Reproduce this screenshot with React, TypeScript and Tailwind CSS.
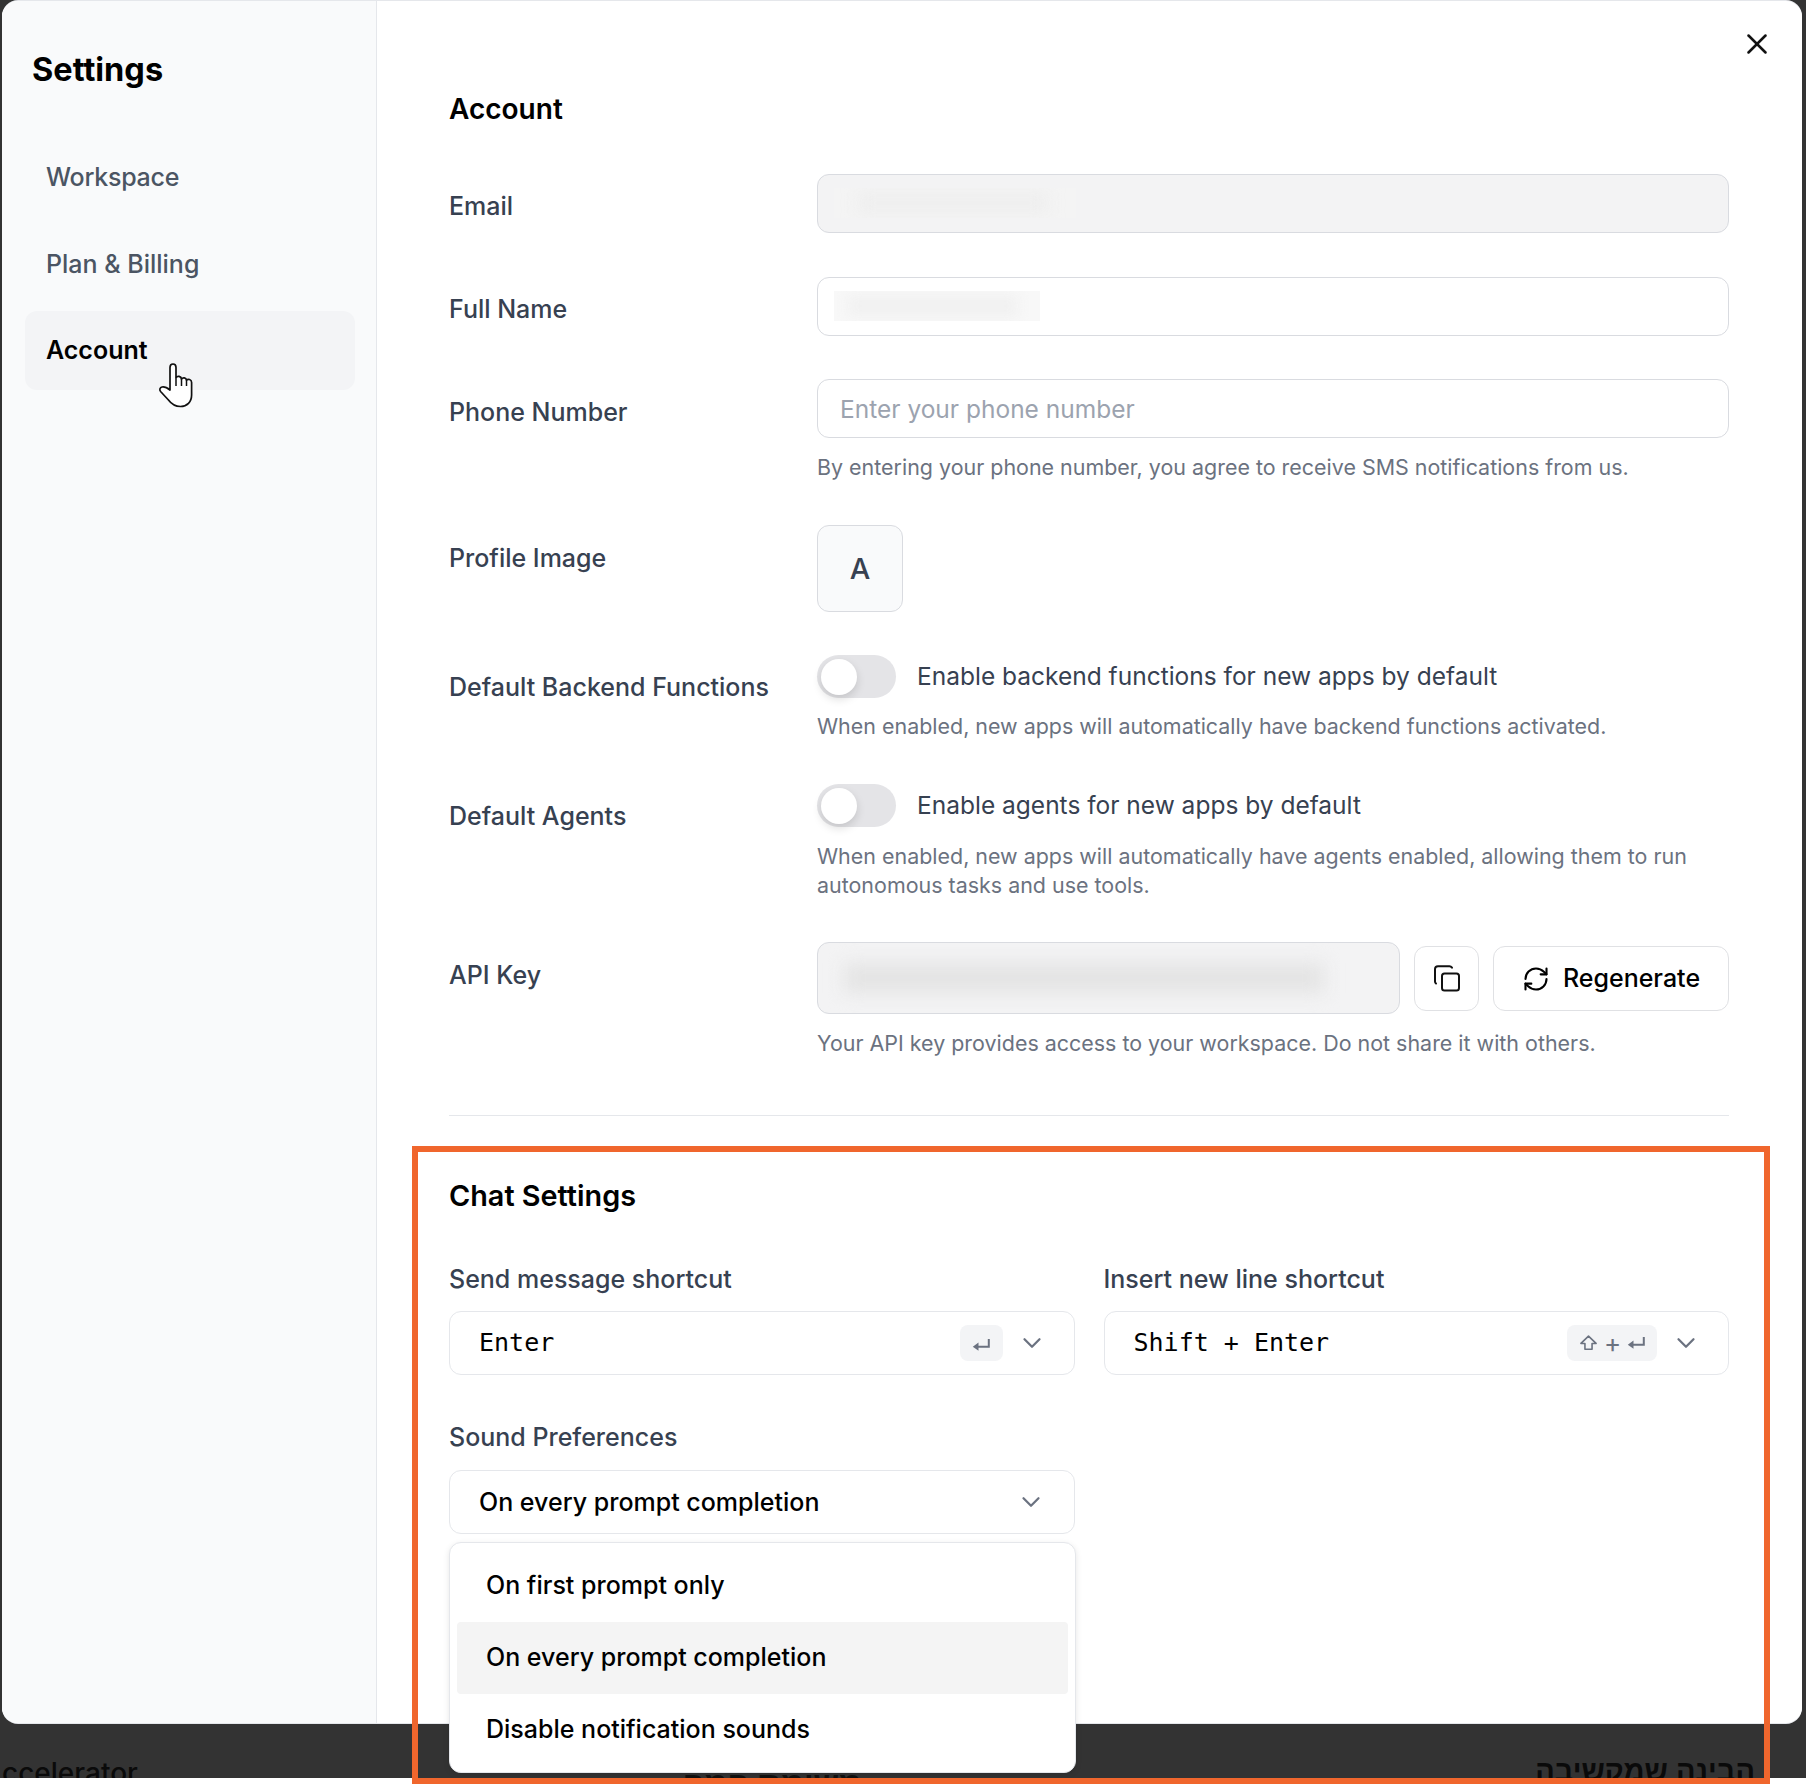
import { ChevronDown, RefreshCw, X } from "lucide-react";

const inter = "font-['Inter',sans-serif]";

function ReturnKey({ className = "" }: { className?: string }) {
  return (
    <svg viewBox="0 0 18 14" className={className} fill="none">
      <path d="M16.8 1V8.7H5" stroke="#6b7280" strokeWidth="2" />
      <path d="M6.5 4.6L0.8 8.7L6.5 12.8Z" fill="#6b7280" />
    </svg>
  );
}

function ShiftKey({ className = "" }: { className?: string }) {
  return (
    <svg viewBox="0 0 20 18" className={className} fill="none">
      <path d="M10 1.2L18.5 9.5H14V16H6V9.5H1.5Z" stroke="#6b7280" strokeWidth="1.8" strokeLinejoin="round" />
    </svg>
  );
}

function CopyIcon() {
  return (
    <svg viewBox="0 0 26 27" className="h-[27px] w-[26px]" fill="none" stroke="#111" strokeWidth="2">
      <rect x="8" y="8.5" width="17" height="17" rx="2.5" />
      <path d="M2 18.5C1.4 18 1 17.3 1 16.5V4C1 2.5 2.3 1.2 4 1.2H15.5C16.5 1.2 17.4 1.8 18 2.6" strokeLinecap="round" />
    </svg>
  );
}

function HandCursor() {
  return (
    <svg viewBox="0 0 36 46" className="h-[46px] w-[36px]">
      <path
        d="M12 28V5.5C12 3.5 13.2 2 15 2C16.8 2 18 3.5 18 5.5V15.5C19.5 13.5 23 14 23.5 17C25 15 28 15.6 28.5 18C30 16.7 33.6 17.3 33.6 20.5V33C33.6 40 29 44.5 22.5 44.5C16.5 44.5 13 41.5 10 37.5L2.6 29.5C1 27.5 2 25.5 4 25C6.5 24.4 9.5 26 12 28Z"
        fill="#fff"
        stroke="#111"
        strokeWidth="1.7"
        strokeLinejoin="round"
      />
      <path d="M18 15.5V24M23.5 17V24M28.5 18V24" stroke="#111" strokeWidth="1.5" fill="none" />
    </svg>
  );
}

function Toggle() {
  return (
    <span className="flex h-[43px] w-[79px] shrink-0 items-center rounded-full bg-[#e4e4e7] px-[4px]">
      <span className="h-[36px] w-[36px] rounded-full bg-white shadow-[0_4px_10px_rgba(0,0,0,0.14)]" />
    </span>
  );
}

function Row({ label, labelClass, className, children }: { label: string; labelClass: string; className: string; children: React.ReactNode }) {
  return (
    <div className={`flex ${className}`}>
      <div className={`w-[368px] shrink-0 text-[25px] font-medium leading-[36px] text-[#374151] ${labelClass}`}>{label}</div>
      <div className="min-w-0 flex-1">{children}</div>
    </div>
  );
}

function Help({ className = "", children }: { className?: string; children: React.ReactNode }) {
  return <p className={`text-[21.45px] leading-[29px] text-[#6b7280] ${className}`}>{children}</p>;
}

function SelectBox({ className = "", children }: { className?: string; children: React.ReactNode }) {
  return (
    <div className={`flex h-[64px] items-center rounded-[12px] border border-[#e5e7eb] bg-white pl-[29px] text-black ${className}`}>
      {children}
    </div>
  );
}

export default function App() {
  return (
    <div className={`relative h-[1786px] w-[1806px] overflow-hidden bg-white ${inter}`}>
      <div className="relative h-[1778px] overflow-hidden bg-[#333333] pl-[2px] pr-[4px] pt-px">
        <div className="relative z-[1] flex h-[1722px] rounded-[16px] bg-white shadow-[0_-1px_0_#e5e7eb,0_1px_0_#e5e7eb]">
          <aside className="w-[375px] shrink-0 rounded-l-[16px] border-r border-[#e5e7eb] bg-[#f9fafb] pl-[23px] pr-[21px]">
            <h1 className="ml-[7px] mt-[47px] text-[32.5px] font-bold leading-[44px] text-black">Settings</h1>
            <nav className="mt-[46px] flex flex-col text-[25px] font-medium">
              <div className="flex h-[79px] items-center pl-[21px] tracking-[-0.25px] text-[#4b5563]">Workspace</div>
              <div className="mt-[8px] flex h-[79px] items-center pl-[21px] text-[#4b5563]">Plan &amp; Billing</div>
              <div className="relative mt-[7px] flex h-[79px] items-center rounded-[12px] bg-[#f3f4f6] pl-[21px] font-semibold text-black">
                Account
                <div className="absolute left-[133px] top-[51px]">
                  <HandCursor />
                </div>
              </div>
            </nav>
          </aside>

          <main className="relative min-w-0 flex-1 pl-[72px] pr-[73px]">
            <button className="absolute right-[28px] top-[26px] text-[#111]">
              <X className="h-[34px] w-[34px]" strokeWidth={1.8} />
            </button>

            <h2 className="mt-[88px] text-[28px] font-semibold leading-[40px] text-black">Account</h2>

            <Row label="Email" labelClass="pt-[14px]" className="mt-[45px]">
              <div className="relative h-[59px] overflow-hidden rounded-[12px] border border-[#d9dbe0] bg-[#f3f3f4]">
                <div className="absolute left-[16px] top-[13px] h-[30px] w-[242px] overflow-hidden bg-[#f4f4f4]">
                  <div className="absolute left-[24px] top-[5px] h-[20px] w-[190px] bg-[#eeeeee] blur-[8px]" />
                </div>
              </div>
            </Row>
            <Row label="Full Name" labelClass="pt-[14px]" className="mt-[44px]">
              <div className="relative h-[59px] overflow-hidden rounded-[12px] border border-[#d9dbe0] bg-white">
                <div className="absolute left-[16px] top-[13px] h-[30px] w-[206px] overflow-hidden bg-[#f8f8f8]">
                  <div className="absolute left-[14px] top-[4px] h-[22px] w-[170px] bg-[#f1f1f1] blur-[6px]" />
                </div>
              </div>
            </Row>
            <Row label="Phone Number" labelClass="pt-[15px]" className="mt-[43px]">
              <div className="flex h-[59px] items-center rounded-[12px] border border-[#d9dbe0] bg-white pl-[22px] pt-[1px] text-[24.5px] text-[#9ca3af]">
                Enter your phone number
              </div>
              <Help className="mt-[15px]">By entering your phone number, you agree to receive SMS notifications from us.</Help>
            </Row>
            <Row label="Profile Image" labelClass="pt-[15px]" className="mt-[43px]">
              <div className="flex h-[87px] w-[86px] items-center justify-center rounded-[12px] border border-[#d9dbe0] bg-[#f9fafb] text-[29px] font-medium text-[#374151]">
                A
              </div>
            </Row>
            <Row label="Default Backend Functions" labelClass="pt-[14px]" className="mt-[43px]">
              <div className="flex items-center gap-[21px] text-[24.5px] text-[#374151]">
                <Toggle />
                <span>Enable backend functions for new apps by default</span>
              </div>
              <Help className="mt-[14px]">When enabled, new apps will automatically have backend functions activated.</Help>
            </Row>
            <Row label="Default Agents" labelClass="pt-[14px]" className="mt-[43px]">
              <div className="flex items-center gap-[21px] text-[24.5px] text-[#374151]">
                <Toggle />
                <span>Enable agents for new apps by default</span>
              </div>
              <Help className="mt-[15px]">
                When enabled, new apps will automatically have agents enabled, allowing them to run
                <br />
                autonomous tasks and use tools.
              </Help>
            </Row>
            <Row label="API Key" labelClass="pt-[15px]" className="mt-[42px]">
              <div className="flex items-center gap-[14px]">
                <div className="relative h-[72px] w-[583px] shrink-0 overflow-hidden rounded-[12px] border border-[#d9dbe0] bg-[#f3f3f4]">
                  <div className="absolute left-[26px] top-[20px] h-[30px] w-[480px] bg-[#e4e4e4] blur-[9px]" />
                </div>
                <button className="flex h-[65px] w-[65px] shrink-0 items-center justify-center rounded-[12px] border border-[#e0e1e4] bg-white">
                  <CopyIcon />
                </button>
                <button className="flex h-[65px] flex-1 items-center justify-center gap-[13px] rounded-[12px] border border-[#e0e1e4] bg-white pt-[2px] text-[25px] font-medium text-black">
                  <RefreshCw className="h-[28px] w-[28px]" strokeWidth={1.8} />
                  Regenerate
                </button>
              </div>
              <Help className="mt-[15px]">Your API key provides access to your workspace. Do not share it with others.</Help>
            </Row>

            <div className="mt-[57px] h-px bg-[#e5e7eb]" />

            <h2 className="mt-[60px] text-[28.8px] font-semibold leading-[40px] text-black">Chat Settings</h2>

            <div className="mt-[45px] grid grid-cols-2 gap-x-[29px]">
              <div>
                <div className="text-[25px] font-medium leading-[36px] text-[#374151]">Send message shortcut</div>
                <SelectBox className="mt-[14px]">
                  <span className="font-['DejaVu_Sans_Mono',monospace] text-[25px]">Enter</span>
                  <span className="ml-auto flex h-[36px] w-[43px] items-center justify-center rounded-[8px] bg-[#f3f4f6] pt-[3px]">
                    <ReturnKey className="h-[14px] w-[18px]" />
                  </span>
                  <ChevronDown className="ml-[14px] mr-[27px] h-[30px] w-[30px] text-[#6b7280]" strokeWidth={1.8} />
                </SelectBox>
              </div>
              <div>
                <div className="text-[25px] font-medium leading-[36px] text-[#374151]">Insert new line shortcut</div>
                <SelectBox className="mt-[14px]">
                  <span className="font-['DejaVu_Sans_Mono',monospace] text-[25px]">Shift + Enter</span>
                  <span className="ml-auto flex h-[36px] w-[90px] items-center justify-center gap-[6px] rounded-[8px] bg-[#f3f4f6] text-[26px] leading-none text-[#6b7280]">
                    <ShiftKey className="h-[16px] w-[19px]" />
                    +
                    <ReturnKey className="h-[14px] w-[18px]" />
                  </span>
                  <ChevronDown className="ml-[14px] mr-[27px] h-[30px] w-[30px] text-[#6b7280]" strokeWidth={1.8} />
                </SelectBox>
              </div>
              <div className="relative mt-[44px]">
                <div className="text-[25px] font-medium leading-[36px] text-[#374151]">Sound Preferences</div>
                <SelectBox className="mt-[15px] text-[25px] font-medium">
                  <span className="pt-[1px]">On every prompt completion</span>
                  <ChevronDown className="ml-auto mr-[28px] h-[30px] w-[30px] text-[#6b7280]" strokeWidth={1.8} />
                </SelectBox>
                <div className="absolute left-0 right-[-1px] top-[123px] z-10 flex h-[231px] flex-col justify-center rounded-[12px] border border-[#e5e7eb] bg-white px-[7px] text-[25px] font-medium text-black shadow-[0_2px_6px_rgba(0,0,0,0.1)]">
                  <div className="flex h-[72px] items-center pl-[29px]">On first prompt only</div>
                  <div className="flex h-[72px] items-center rounded-[4px] bg-[#f4f4f4] pl-[29px]">On every prompt completion</div>
                  <div className="flex h-[72px] items-center pl-[29px]">Disable notification sounds</div>
                </div>
              </div>
            </div>
          </main>
        </div>

        <div className="absolute bottom-[-17px] left-[2px] text-[28px] font-medium leading-[44px] text-[#0a0a0a]">ccelerator</div>
        <div dir="rtl" className="absolute bottom-[-27px] left-[683px] font-['Liberation_Sans',sans-serif] text-[32px] font-bold leading-[44px] text-[#111]">משימת המה</div>
        <div dir="rtl" className="absolute bottom-[-15px] right-[51px] font-['Liberation_Sans',sans-serif] text-[29px] font-bold leading-[44px] text-[#0a0a0a]">הבינה שמקשיבה</div>
      </div>

      <div className="pointer-events-none absolute left-[412px] top-[1146px] z-20 h-[638px] w-[1358px] border-[6px] border-[#f0662d]" />
    </div>
  );
}
